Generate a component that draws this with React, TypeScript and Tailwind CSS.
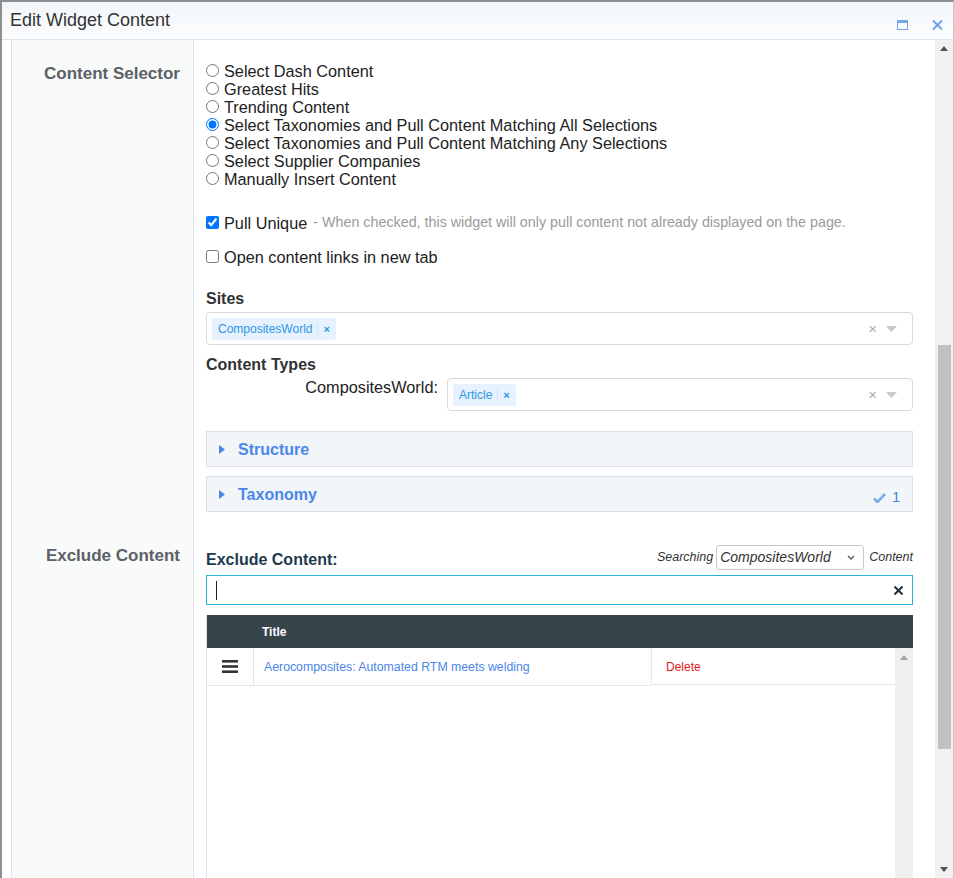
import React from 'react';

const radios = [
  'Select Dash Content',
  'Greatest Hits',
  'Trending Content',
  'Select Taxonomies and Pull Content Matching All Selections',
  'Select Taxonomies and Pull Content Matching Any Selections',
  'Select Supplier Companies',
  'Manually Insert Content',
];

const Tag = ({ label }: { label: string }) => (
  <span className="inline-flex items-center h-[22px] rounded-[2px] bg-[#e6f2fd] text-[12px] leading-[14px] text-[#2f95e6]">
    <span className="pl-[6px] pr-[5px]">{label}</span>
    <span className="border-l border-[#cfe5fa] pl-[5px] pr-[6px] font-bold text-[11px]">×</span>
  </span>
);

const MultiSelect = ({ label, className = '' }: { label: string; className?: string }) => (
  <div className={`h-[33px] border border-[#dadada] rounded-[4px] flex items-center pl-[5px] pr-[15px] bg-white ${className}`}>
    <Tag label={label} />
    <div className="flex-1" />
    <span className="text-[#aaa] text-[15px] leading-none">×</span>
    <svg className="ml-[9px]" width="11" height="6" viewBox="0 0 11 6">
      <path d="M0 0h11L5.5 6z" fill="#c8c8c8" />
    </svg>
  </div>
);

const Panel = ({ title, badge }: { title: string; badge?: boolean }) => (
  <div className="h-[36px] border border-[#d9e2ea] bg-[#f2f6f9] flex items-center pl-[12px] pr-[12px]">
    <svg width="6" height="9" viewBox="0 0 6 9">
      <path d="M0 0l6 4.5L0 9z" fill="#4a86e8" />
    </svg>
    <span className="ml-[13px] mt-[1px] text-[16px] font-bold text-[#4a86ec]">{title}</span>
    <div className="flex-1" />
    {badge && (
      <span className="flex items-center gap-[6px] mt-[7px] text-[14px] text-[#3d7fdc]">
        <svg width="13" height="10" viewBox="0 0 13 10">
          <path d="M1 5.5l3.5 3.5L12 1" fill="none" stroke="#7eaaea" strokeWidth="2.6" />
        </svg>
        1
      </span>
    )}
  </div>
);

const SideLabel = ({ text, pt }: { text: string; pt: string }) => (
  <div className={`w-[183px] shrink-0 bg-[#f9fafa] border-l border-r border-[#dfe3e6] text-right pr-[13px] ${pt}`}>
    <span className="text-[17px] leading-[20px] font-bold text-[#5b6166]">{text}</span>
  </div>
);

export default function App() {
  return (
    <div className="h-[878px] w-[954px] overflow-hidden bg-white border-t-2 border-l-2 border-r border-t-[#8e8e8e] border-l-[#8e8e8e] border-r-[#c8c8c8] flex flex-col font-['Liberation_Sans',Arial,sans-serif] text-[#222]">
      {/* title bar */}
      <div className="h-[38px] shrink-0 border-b border-[#dde3e8] bg-gradient-to-b from-[#f2f6f9] to-[#fbfcfd] flex items-center pl-[8px] pr-[10px]">
        <span className="text-[18px] text-[#333] -mt-[1px]">Edit Widget Content</span>
        <div className="flex-1" />
        <svg className="mt-[9px]" width="11" height="10" viewBox="0 0 11 10">
          <rect x="0.5" y="0.5" width="10" height="9" fill="none" stroke="#78a3ee" />
          <rect x="0" y="0" width="11" height="3" fill="#78a3ee" />
        </svg>
        <svg className="ml-[24px] mt-[9px]" width="11" height="10" viewBox="0 0 11 10">
          <path d="M1 0.5l9 9M10 0.5l-9 9" stroke="#6f9ff0" strokeWidth="2" />
        </svg>
      </div>

      <div className="flex flex-1 min-h-0">
        <div className="w-[9px] shrink-0" />
        <div className="flex-1 min-w-0 flex flex-col">
          {/* content selector row */}
          <div className="flex h-[490px] shrink-0">
            <SideLabel text="Content Selector" pt="pt-[22px]" />
            <div className="flex-1 min-w-0 pl-[12px] pr-[22px] pt-[22px]">
              <div className="text-[16.3px] leading-[18px]">
                {radios.map((r, i) => (
                  <label key={r} className="flex items-center h-[18px]">
                    <input type="radio" name="sel" defaultChecked={i === 3} className="w-[13px] h-[13px] mr-[5px] -mt-[1px]" />
                    {r}
                  </label>
                ))}
              </div>
              <label className="mt-[25px] h-[20px] flex items-center text-[16.3px]">
                <input type="checkbox" defaultChecked className="w-[13px] h-[13px] mr-[5px] -mt-[1px]" />
                Pull Unique
                <span className="ml-[6px] text-[14.3px] text-[#9a9a9a]">- When checked, this widget will only pull content not already displayed on the page.</span>
              </label>
              <label className="mt-[14px] h-[20px] flex items-center text-[16.3px]">
                <input type="checkbox" className="w-[13px] h-[13px] mr-[5px] -mt-[1px]" />
                Open content links in new tab
              </label>
              <div className="mt-[22px] text-[16px] leading-[20px] font-bold text-[#333]">Sites</div>
              <MultiSelect label="CompositesWorld" className="mt-[3px]" />
              <div className="mt-[10px] text-[16px] leading-[20px] font-bold text-[#333]">Content Types</div>
              <div className="mt-[3px] flex items-start">
                <div className="w-[241px] shrink-0 text-right pr-[9px] text-[16.3px] leading-[16px] pt-[1px]">CompositesWorld:</div>
                <MultiSelect label="Article" className="flex-1" />
              </div>
              <div className="mt-[20px]">
                <Panel title="Structure" />
              </div>
              <div className="mt-[9px]">
                <Panel title="Taxonomy" badge />
              </div>
            </div>
          </div>

          {/* exclude content row */}
          <div className="flex flex-1 min-h-0">
            <SideLabel text="Exclude Content" pt="pt-[14px]" />
            <div className="flex-1 min-w-0 pl-[12px] pr-[22px] pt-[15px] flex flex-col">
              <div className="h-[25px] flex items-end">
                <span className="text-[16px] leading-[20px] font-bold text-[#1d3a4e]">Exclude Content:</span>
                <div className="flex-1" />
                <div className="flex items-center self-stretch text-[12.5px] italic text-[#333]">
                  <span>Searching</span>
                  <div className="ml-[3px] w-[148px] h-[25px] border border-[#c9c9c9] rounded-[3px] flex items-center pl-[3px] pr-[8px] text-[14px]">
                    CompositesWorld
                    <div className="flex-1" />
                    <svg width="8" height="5" viewBox="0 0 8 5">
                      <path d="M1 1l3 3 3-3" fill="none" stroke="#555" strokeWidth="1.3" />
                    </svg>
                  </div>
                  <span className="ml-[5px]">Content</span>
                </div>
              </div>
              <div className="mt-[5px] h-[30px] shrink-0 border border-[#2aafe0] flex items-center pl-[9px] pr-[9px]">
                <div className="w-px h-[19px] bg-[#222]" />
                <div className="flex-1" />
                <svg width="9" height="9" viewBox="0 0 9 9">
                  <path d="M0.5 0.5l8 8M8.5 0.5l-8 8" stroke="#1e2f3c" strokeWidth="2" />
                </svg>
              </div>
              <div className="mt-[10px] flex-1 flex flex-col border-l border-[#e3e3e3]">
                <div className="h-[33px] shrink-0 bg-[#37444a] flex items-center">
                  <div className="w-[46px]" />
                  <span className="pl-[9px] text-[12px] font-bold text-white">Title</span>
                </div>
                <div className="flex flex-1">
                  <div className="flex-1 min-w-0">
                    <div className="flex h-[38px]">
                      <div className="w-[47px] shrink-0 border-r border-b border-[#e6e6e6] flex items-center justify-center">
                        <svg width="16" height="13" viewBox="0 0 16 13">
                          <rect y="0" width="16" height="2.6" fill="#333" />
                          <rect y="5.2" width="16" height="2.6" fill="#333" />
                          <rect y="10.4" width="16" height="2.6" fill="#333" />
                        </svg>
                      </div>
                      <div className="w-[397px] shrink-0 border-b border-[#e6e6e6] flex items-center pl-[10px] pt-[1px] text-[12.3px] text-[#4a86e8]">
                        Aerocomposites: Automated RTM meets welding
                      </div>
                      <div className="flex-1 h-[37px] border-b border-l border-[#e6e6e6] flex items-center pl-[14px] pt-[1px] text-[12px] text-[#e0201c]">
                        Delete
                      </div>
                    </div>
                  </div>
                  <div className="w-[18px] shrink-0 bg-[#f0f0f0] flex justify-center pt-[7px]">
                    <svg width="8" height="5" viewBox="0 0 8 5">
                      <path d="M0 5L4 0l4 5z" fill="#a3a3a3" />
                    </svg>
                  </div>
                </div>
              </div>
            </div>
          </div>
        </div>

        {/* main scrollbar */}
        <div className="w-[18px] shrink-0 bg-[#f1f1f1] flex flex-col items-center">
          <svg className="mt-[6px]" width="8" height="5" viewBox="0 0 8 5">
            <path d="M0 5L4 0l4 5z" fill="#505050" />
          </svg>
          <div className="mt-[294px] w-[13px] h-[404px] bg-[#c1c1c1]" />
          <div className="flex-1" />
          <svg className="mb-[6px]" width="8" height="5" viewBox="0 0 8 5">
            <path d="M0 0h8L4 5z" fill="#505050" />
          </svg>
        </div>
      </div>
    </div>
  );
}
